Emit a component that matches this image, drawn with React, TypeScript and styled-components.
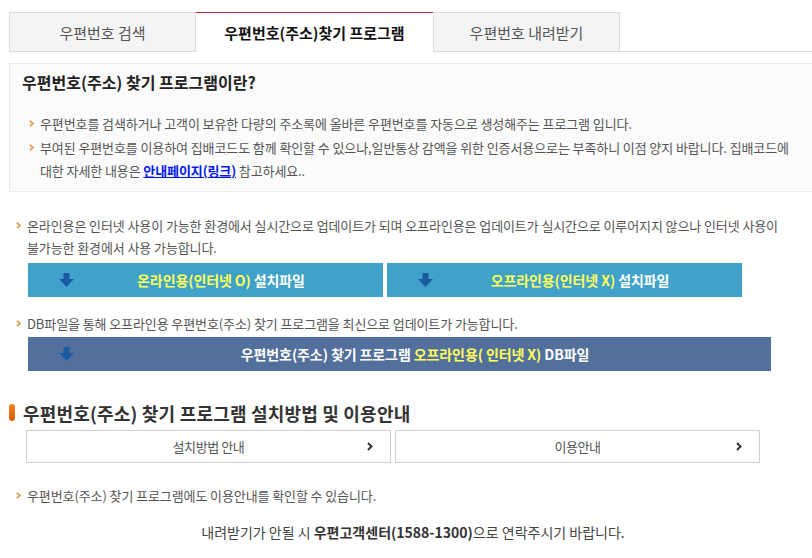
import React from "react";
import styled, { createGlobalStyle } from "styled-components";

const Global = createGlobalStyle`
  html, body { margin: 0; padding: 0; background: #fff; overflow: hidden; }
  body { font-family: "Noto Sans CJK KR", "Noto Sans", sans-serif; color: #555; word-break: keep-all; }
  * { box-sizing: border-box; }
`;

const Page = styled.div`
  width: 808px;
  margin-left: 9px;
  padding-top: 12px;
`;

const TabBar = styled.div`
  display: flex;
  align-items: flex-end;
  margin-right: -20px;
`;

const Tab = styled.div<{ $active?: boolean; $w: number }>`
  width: ${(p) => p.$w}px;
  height: 40px;
  display: flex;
  align-items: center;
  justify-content: center;
  font-size: 15px;
  font-weight: ${(p) => (p.$active ? 700 : 400)};
  color: ${(p) => (p.$active ? "#111" : "#555")};
  background: ${(p) => (p.$active ? "#fff" : "#f4f4f4")};
  border: 1px solid #dcdcdc;
  border-top: ${(p) => (p.$active ? "1px solid #c0282c" : "1px solid #dcdcdc")};
  border-bottom: ${(p) => (p.$active ? "1px solid #fff" : "1px solid #dcdcdc")};
  border-left: ${(p) => (p.$active ? "none" : "1px solid #dcdcdc")};
  border-right: ${(p) => (p.$active ? "none" : "1px solid #dcdcdc")};
`;

const TabFill = styled.div`
  flex: 1;
  border-bottom: 1px solid #dcdcdc;
`;

const InfoBox = styled.div`
  margin-top: 11px;
  margin-right: -20px;
  background: #fbfbfb;
  border: 1px solid #ebebeb;
  padding: 7px 12px 8px 12px;
`;

const InfoTitle = styled.h2`
  margin: 0;
  font-size: 16px;
  line-height: 22px;
  font-weight: 700;
  color: #222;
`;

const InfoList = styled.ul`
  list-style: none;
  margin: 19px 0 0 0;
  padding: 0 0 0 7px;
  width: 779px;
`;

const Item = styled.li<{ $lh: number }>`
  display: flex;
  font-size: 13px;
  line-height: ${(p) => p.$lh}px;
  color: #555;
  letter-spacing: -0.1px;
`;

const BulletBox = styled.span<{ $lh: number }>`
  flex: 0 0 11px;
  height: ${(p) => p.$lh}px;
  display: flex;
  align-items: center;
`;

const ItemText = styled.span`
  flex: 1;
`;

const Link = styled.a`
  color: #0018ee;
  font-weight: 700;
  text-decoration: underline;
`;

const Section = styled.div<{ $mt: number }>`
  margin-top: ${(p) => p.$mt}px;
  padding-left: 7px;
  width: 790px;
`;

const ButtonRow = styled.div`
  display: flex;
  gap: 4px;
  margin-top: 4px;
  margin-left: 19px;
`;

const DownBtn = styled.a<{ $bg: string; $w: number }>`
  width: ${(p) => p.$w}px;
  height: 34px;
  background: ${(p) => p.$bg};
  display: grid;
  grid-template-columns: 62px 1fr 31px;
  align-items: center;
  text-decoration: none;
  font-size: 14px;
  font-weight: 700;
  color: #fff;
  letter-spacing: -0.1px;
`;

const IconCell = styled.span`
  padding-left: 31px;
  display: flex;
  align-items: center;
`;

const BtnLabel = styled.span`
  text-align: center;
  white-space: nowrap;
`;

const Yellow = styled.span`
  color: #ffff5a;
`;

const DbRow = styled.div`
  margin-top: 2px;
  margin-left: 19px;
`;

const Heading = styled.h3`
  margin: 30px 0 0 0;
  display: flex;
  align-items: center;
  gap: 8px;
  font-size: 18px;
  line-height: 24px;
  font-weight: 700;
  color: #333;
  letter-spacing: 0.2px;
`;

const Pill = styled.span`
  width: 6px;
  height: 17px;
  border-radius: 3px;
  background: linear-gradient(#f4861e, #d95a06);
`;

const LinkRow = styled.div`
  display: flex;
  gap: 4px;
  margin-top: 5px;
  margin-left: 17px;
`;

const GuideBtn = styled.a`
  width: 365px;
  height: 33px;
  border: 1px solid #cfcfcf;
  background: #fff;
  display: grid;
  grid-template-columns: 40px 1fr 40px;
  align-items: center;
  font-size: 13px;
  color: #555;
  text-decoration: none;
  letter-spacing: -0.4px;
`;

const GuideLabel = styled.span`
  text-align: center;
`;

const ChevCell = styled.span`
  display: flex;
  justify-content: center;
  align-items: center;
`;

const Footer = styled.p`
  margin: 14px 0 0 0;
  text-align: center;
  font-size: 14px;
  line-height: 22px;
  color: #444;
`;

const Strong = styled.b`
  font-weight: 700;
  color: #333;
`;

const Bullet = () => (
  <svg width="5" height="7" viewBox="0 0 5 7">
    <path d="M0.8 0.8 L4 3.5 L0.8 6.2" fill="none" stroke="#e0914a" strokeWidth="1.6" />
  </svg>
);

const DownArrow = () => (
  <svg width="15" height="14" viewBox="0 0 15 14">
    <path d="M4.5 0 H10.5 V6 H15 L7.5 14 L0 6 H4.5 Z" fill="#1a5aa0" />
  </svg>
);

const Chevron = () => (
  <svg width="6" height="9" viewBox="0 0 6 9">
    <path d="M1 1 L4.5 4.5 L1 8" fill="none" stroke="#333" strokeWidth="2" />
  </svg>
);

const Bul = ({ lh, children }: { lh: number; children: React.ReactNode }) => (
  <Item $lh={lh}>
    <BulletBox $lh={lh}>
      <Bullet />
    </BulletBox>
    <ItemText>{children}</ItemText>
  </Item>
);

export default function App() {
  return (
    <>
      <Global />
      <Page>
        <TabBar>
          <Tab $w={187}>우편번호 검색</Tab>
          <Tab $w={237} $active>
            우편번호(주소)찾기 프로그램
          </Tab>
          <Tab $w={187}>우편번호 내려받기</Tab>
          <TabFill />
        </TabBar>

        <InfoBox>
          <InfoTitle>우편번호(주소) 찾기 프로그램이란?</InfoTitle>
          <InfoList>
            <Bul lh={23.5}>우편번호를 검색하거나 고객이 보유한 다량의 주소록에 올바른 우편번호를 자동으로 생성해주는 프로그램 입니다.</Bul>
            <Bul lh={23.5}>
              부여된 우편번호를 이용하여 집배코드도 함께 확인할 수 있으나,일반통상 감액을 위한 인증서용으로는 부족하니 이점 양지 바랍니다. 집배코드에 대한 자세한 내용은 <Link href="#">안내페이지(링크)</Link> 참고하세요..
            </Bul>
          </InfoList>
        </InfoBox>

        <Section $mt={23}>
          <Bul lh={22}>
            온라인용은 인터넷 사용이 가능한 환경에서 실시간으로 업데이트가 되며 오프라인용은 업데이트가 실시간으로 이루어지지 않으나 인터넷 사용이 불가능한 환경에서 사용 가능합니다.
          </Bul>
        </Section>
        <ButtonRow>
          <DownBtn $bg="#40a2c8" $w={355} href="#">
            <IconCell><DownArrow /></IconCell>
            <BtnLabel><Yellow>온라인용(인터넷 O)</Yellow> 설치파일</BtnLabel>
            <span />
          </DownBtn>
          <DownBtn $bg="#40a2c8" $w={355} href="#">
            <IconCell><DownArrow /></IconCell>
            <BtnLabel><Yellow>오프라인용(인터넷 X)</Yellow> 설치파일</BtnLabel>
            <span />
          </DownBtn>
        </ButtonRow>

        <Section $mt={16}>
          <Bul lh={22}>DB파일을 통해 오프라인용 우편번호(주소) 찾기 프로그램을 최신으로 업데이트가 가능합니다.</Bul>
        </Section>
        <DbRow>
          <DownBtn $bg="#53709c" $w={743} href="#">
            <IconCell><DownArrow /></IconCell>
            <BtnLabel>우편번호(주소) 찾기 프로그램 <Yellow>오프라인용( 인터넷 X)</Yellow> DB파일</BtnLabel>
            <span />
          </DownBtn>
        </DbRow>

        <Heading>
          <Pill />
          우편번호(주소) 찾기 프로그램 설치방법 및 이용안내
        </Heading>
        <LinkRow>
          <GuideBtn href="#">
            <span />
            <GuideLabel>설치방법 안내</GuideLabel>
            <ChevCell><Chevron /></ChevCell>
          </GuideBtn>
          <GuideBtn href="#">
            <span />
            <GuideLabel>이용안내</GuideLabel>
            <ChevCell><Chevron /></ChevCell>
          </GuideBtn>
        </LinkRow>

        <Section $mt={22}>
          <Bul lh={22}>우편번호(주소) 찾기 프로그램에도 이용안내를 확인할 수 있습니다.</Bul>
        </Section>

        <Footer>
          내려받기가 안될 시 <Strong>우편고객센터(1588-1300)</Strong>으로 연락주시기 바랍니다.
        </Footer>
      </Page>
    </>
  );
}
